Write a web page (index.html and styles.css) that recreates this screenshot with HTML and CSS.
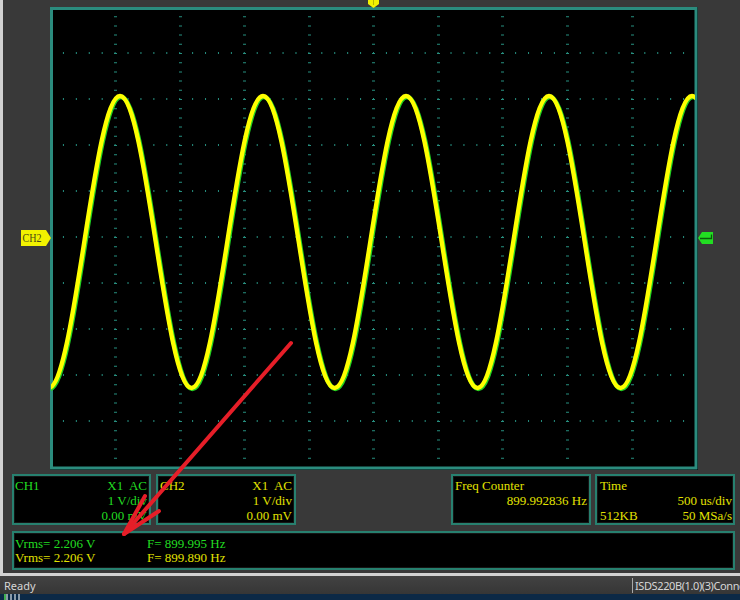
FILE: index.html
```html
<!DOCTYPE html>
<html>
<head>
<meta charset="utf-8">
<link rel="stylesheet" href="styles.css">
</head>
<body>
<div class="window">
  <svg class="scope" width="737" height="472" viewBox="3 0 737 472">
    <defs>
      <clipPath id="inner"><rect x="51" y="9" width="644" height="458"/></clipPath>
    </defs>
    <rect x="50" y="7" width="648" height="463" fill="#000"/>
    <g class="grid-h" stroke="#279080" stroke-width="2" stroke-dasharray="1 11.92">
      <line x1="50" y1="53" x2="696" y2="53"/>
      <line x1="50" y1="99" x2="696" y2="99"/>
      <line x1="50" y1="145" x2="696" y2="145"/>
      <line x1="50" y1="191" x2="696" y2="191"/>
      <line x1="50" y1="237" x2="696" y2="237"/>
      <line x1="50" y1="283" x2="696" y2="283"/>
      <line x1="50" y1="329" x2="696" y2="329"/>
      <line x1="50" y1="375" x2="696" y2="375"/>
      <line x1="50" y1="421" x2="696" y2="421"/>
    </g>
    <g class="grid-v" stroke="#279080" stroke-width="3" stroke-dasharray="1 8.2">
      <line x1="115.5" y1="7" x2="115.5" y2="467"/>
      <line x1="180.5" y1="7" x2="180.5" y2="467"/>
      <line x1="244.5" y1="7" x2="244.5" y2="467"/>
      <line x1="309.5" y1="7" x2="309.5" y2="467"/>
      <line x1="373.5" y1="7" x2="373.5" y2="467"/>
      <line x1="438.5" y1="7" x2="438.5" y2="467"/>
      <line x1="502.5" y1="7" x2="502.5" y2="467"/>
      <line x1="567.5" y1="7" x2="567.5" y2="467"/>
      <line x1="632.5" y1="7" x2="632.5" y2="467"/>
    </g>
    <rect x="51.5" y="8.5" width="644.5" height="459.5" fill="none" stroke="#2b8c7e" stroke-width="3"/>
    <g clip-path="url(#inner)" fill="none" stroke-linejoin="round">
      <path transform="translate(0.9 0.8)" stroke="#22d022" stroke-width="4.8"
        d="M12.75,242
        c11.658,74.8 22.81,146 35.75,146 c12.94,0 24.09,-71.2 35.75,-146 c11.658,-74.8 22.81,-146 35.75,-146 c12.94,0 24.09,71.2 35.75,146
        c11.658,74.8 22.81,146 35.75,146 c12.94,0 24.09,-71.2 35.75,-146 c11.658,-74.8 22.81,-146 35.75,-146 c12.94,0 24.09,71.2 35.75,146
        c11.658,74.8 22.81,146 35.75,146 c12.94,0 24.09,-71.2 35.75,-146 c11.658,-74.8 22.81,-146 35.75,-146 c12.94,0 24.09,71.2 35.75,146
        c11.658,74.8 22.81,146 35.75,146 c12.94,0 24.09,-71.2 35.75,-146 c11.658,-74.8 22.81,-146 35.75,-146 c12.94,0 24.09,71.2 35.75,146
        c11.658,74.8 22.81,146 35.75,146 c12.94,0 24.09,-71.2 35.75,-146 c11.658,-74.8 22.81,-146 35.75,-146 c12.94,0 24.09,71.2 35.75,146"/>
      <path stroke="#ffff00" stroke-width="4.4"
        d="M12.75,242
        c11.658,74.8 22.81,146 35.75,146 c12.94,0 24.09,-71.2 35.75,-146 c11.658,-74.8 22.81,-146 35.75,-146 c12.94,0 24.09,71.2 35.75,146
        c11.658,74.8 22.81,146 35.75,146 c12.94,0 24.09,-71.2 35.75,-146 c11.658,-74.8 22.81,-146 35.75,-146 c12.94,0 24.09,71.2 35.75,146
        c11.658,74.8 22.81,146 35.75,146 c12.94,0 24.09,-71.2 35.75,-146 c11.658,-74.8 22.81,-146 35.75,-146 c12.94,0 24.09,71.2 35.75,146
        c11.658,74.8 22.81,146 35.75,146 c12.94,0 24.09,-71.2 35.75,-146 c11.658,-74.8 22.81,-146 35.75,-146 c12.94,0 24.09,71.2 35.75,146
        c11.658,74.8 22.81,146 35.75,146 c12.94,0 24.09,-71.2 35.75,-146 c11.658,-74.8 22.81,-146 35.75,-146 c12.94,0 24.09,71.2 35.75,146"/>
    </g>
    <!-- trigger position marker -->
    <polygon points="368,0 379,0 379,4 373.5,8 368,4" fill="#f2f200"/>
    <line x1="373.5" y1="0" x2="373.5" y2="5" stroke="#b8b800" stroke-width="1"/>
    <!-- CH2 level marker -->
    <polygon points="21,230 46,230 51,238 46,246 21,246" fill="#f2f200"/>
    <text x="22.5" y="242" font-family="Liberation Serif, serif" font-size="12" textLength="19" lengthAdjust="spacingAndGlyphs" fill="#4a4a14">CH2</text>
    <!-- trigger level marker -->
    <polygon points="698,238 702,232 713,232 713,244 702,244" fill="#22dd22"/>
    <path d="M700,238.5 H711.5 V234.5" fill="none" stroke="#0b5a0b" stroke-width="1.3"/>
  </svg>

  <div class="panels">
    <div class="panel ch1">
      <div class="row"><span>CH1</span><span>X1  AC</span></div>
      <div class="row"><span></span><span>1 V/div</span></div>
      <div class="row"><span></span><span>0.00 mV</span></div>
    </div>
    <div class="panel ch2">
      <div class="row"><span>CH2</span><span>X1  AC</span></div>
      <div class="row"><span></span><span>1 V/div</span></div>
      <div class="row"><span></span><span>0.00 mV</span></div>
    </div>
    <div class="panel freq">
      <div class="row"><span>Freq Counter</span><span></span></div>
      <div class="row"><span></span><span>899.992836 Hz</span></div>
      <div class="row"><span></span><span></span></div>
    </div>
    <div class="panel time">
      <div class="row"><span>Time</span><span></span></div>
      <div class="row"><span></span><span>500 us/div</span></div>
      <div class="row"><span>512KB</span><span>50 MSa/s</span></div>
    </div>
  </div>

  <div class="panel measure">
    <div class="mrow green"><span class="mcol">Vrms= 2.206 V</span><span>F= 899.995 Hz</span></div>
    <div class="mrow yellow"><span class="mcol">Vrms= 2.206 V</span><span>F= 899.890 Hz</span></div>
  </div>
</div>

<div class="statusbar">
  <span class="ready">Ready</span>
  <span class="conn">ISDS220B(1.0)(3)Connected</span>
</div>
<div class="taskbar"><span class="tb-icon"></span></div>

<svg class="arrow" width="740" height="600" viewBox="0 0 740 600">
  <g stroke="#e61e28" stroke-width="4" stroke-linecap="round" fill="none">
    <line x1="291" y1="343" x2="124" y2="534"/>
    <line x1="124" y1="534" x2="145" y2="496"/>
    <line x1="124" y1="534" x2="159" y2="511"/>
  </g>
</svg>
</body>
</html>
```

FILE: styles.css
```css
* {
  box-sizing: border-box;
  margin: 0;
  padding: 0;
}

html, body {
  width: 740px;
  height: 600px;
  overflow: hidden;
  background: #393939;
}

body {
  position: relative;
  font-family: "Liberation Serif", "Times New Roman", serif;
}

.window {
  height: 576px;
  border-left: 3px solid #d2d2d2;
  border-bottom: 3px solid #d2d2d2;
}

.scope {
  display: block;
}

.panels {
  display: flex;
  height: 51px;
  margin-top: 2px;
  padding-left: 9px;
}

.panel {
  background: #000;
  border: 2px solid #27806f;
  box-shadow: inset 0 0 0 1px #151515;
  font-size: 13px;
  line-height: 15px;
  padding: 2px 2px 0 2px;
}

.ch1 { width: 139px; color: #22dd22; padding-left: 1px; }
.ch2 { width: 140px; margin-left: 5px; color: #e2e200; }
.freq { width: 140px; margin-left: 155px; color: #e2e200; }
.time { width: 140px; margin-left: 4px; color: #e2e200; padding-left: 3px; padding-right: 1px; }

.row {
  display: flex;
  justify-content: space-between;
  height: 15px;
  white-space: pre;
}

.measure {
  width: 723px;
  height: 39px;
  margin-top: 6px;
  margin-left: 9px;
  padding: 4px 1px 0 1px;
  line-height: 14px;
}

.mrow {
  display: flex;
  height: 14px;
  white-space: pre;
}

.mcol {
  width: 132px;
}

.green { color: #22dd22; }
.yellow { color: #e2e200; }

.statusbar {
  display: flex;
  align-items: center;
  height: 18px;
  background: linear-gradient(#424242, #363636);
  font-family: "Noto Sans", "Open Sans", sans-serif;
  font-size: 11px;
  color: #d6d6d6;
}

.ready {
  padding-left: 4px;
}

.conn {
  margin-left: auto;
  width: 108px;
  height: 15px;
  line-height: 15px;
  border-left: 1px solid #a8a8a8;
  padding-left: 2px;
  white-space: nowrap;
  overflow: hidden;
  letter-spacing: -0.4px;
}

.taskbar {
  height: 6px;
  background: #0c2946;
  padding-left: 4px;
}

.tb-icon {
  display: block;
  width: 16px;
  height: 6px;
  background: repeating-linear-gradient(90deg, #8a9aa8 0 2px, transparent 2px 4px);
  border-left: 2px solid #3fae4f;
}

.arrow {
  position: absolute;
  left: 0;
  top: 0;
  pointer-events: none;
}
```
